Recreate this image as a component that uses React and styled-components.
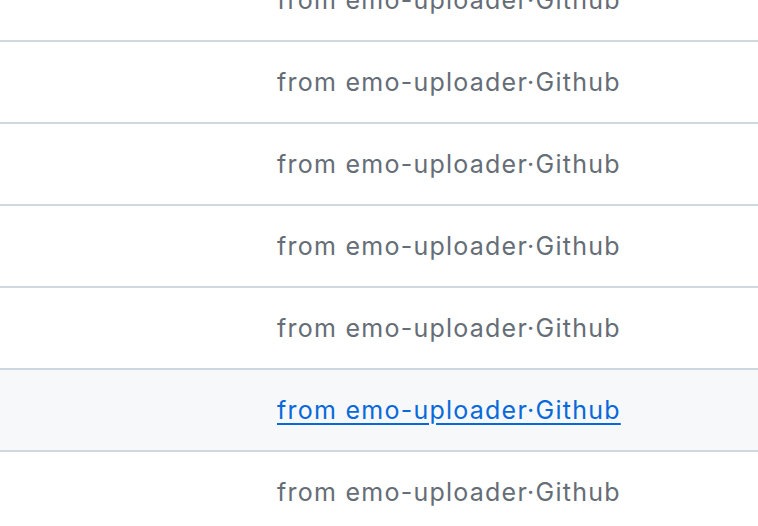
import React from 'react';
import styled, { createGlobalStyle } from 'styled-components';

const GlobalStyle = createGlobalStyle`
	body {
		margin: 0;
		background: #ffffff;
		font-family: Inter, "Noto Sans", "Liberation Sans", sans-serif;
		overflow: hidden;
	}
`;

const List = styled.ul`
	list-style: none;
	padding: 0;
	margin: -40px 0 0 0;
`;

const Row = styled.li`
	display: flex;
	align-items: center;
	height: 80px;
	padding-left: 277px;
	border-bottom: 2px solid #d0d7de;
	background: ${(p) => (p.$hover ? '#f6f8fa' : '#ffffff')};
`;

const Source = styled.a`
	font-size: 25px;
	letter-spacing: 1.25px;
	color: ${(p) => (p.$hover ? '#0969da' : '#656d76')};
	text-decoration: ${(p) => (p.$hover ? 'underline' : 'none')};
	text-underline-offset: 4px;
	text-decoration-thickness: 2px;
	white-space: nowrap;
`;

const rows = [0, 1, 2, 3, 4, 5, 6];

export default () => (
	<>
		<GlobalStyle />
		<List>
			{rows.map((i) => (
				<Row key={i} $hover={i === 5}>
					<Source href="#" $hover={i === 5}>from emo-uploader·Github</Source>
				</Row>
			))}
		</List>
	</>
);
